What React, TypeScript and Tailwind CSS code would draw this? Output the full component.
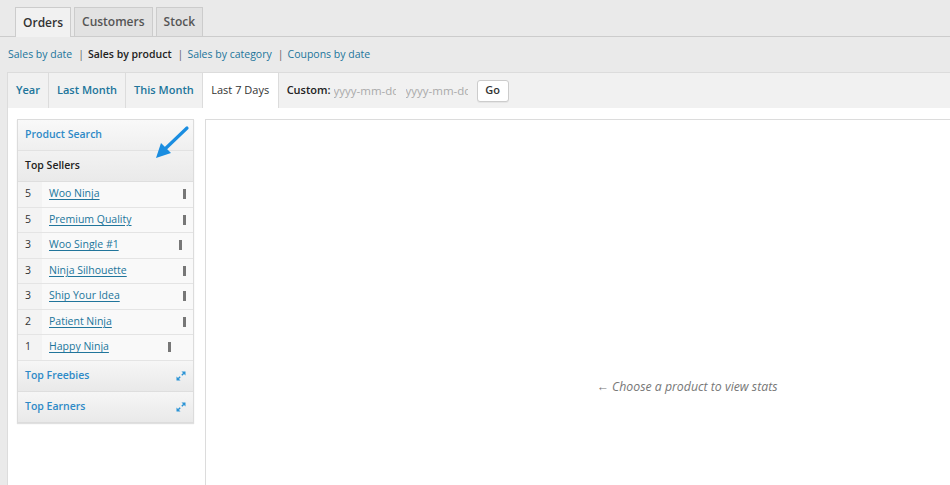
import React from 'react';

interface Seller {
  qty: number;
  name: string;
  barClass: string;
}

const sellers: Seller[] = [
  { qty: 5, name: 'Woo Ninja', barClass: 'mr-[7px]' },
  { qty: 5, name: 'Premium Quality', barClass: 'mr-[7px]' },
  { qty: 3, name: 'Woo Single #1', barClass: 'mr-[11px]' },
  { qty: 3, name: 'Ninja Silhouette', barClass: 'mr-[7px]' },
  { qty: 3, name: 'Ship Your Idea', barClass: 'mr-[7px]' },
  { qty: 2, name: 'Patient Ninja', barClass: 'mr-[7px]' },
  { qty: 1, name: 'Happy Ninja', barClass: 'mr-[22px]' },
];

const ranges = ['Year', 'Last Month', 'This Month'];

const ExpandIcon: React.FC = () => (
  <svg width="10" height="10" viewBox="0 0 10 10" className="text-[#2a93d5]">
    <line x1="2.2" y1="7.8" x2="4.2" y2="5.8" stroke="currentColor" strokeWidth="1.4" />
    <line x1="5.8" y1="4.2" x2="7.8" y2="2.2" stroke="currentColor" strokeWidth="1.4" />
    <polygon points="0.5,9.5 0.5,5.5 4.5,9.5" fill="currentColor" />
    <polygon points="9.5,0.5 9.5,4.5 5.5,0.5" fill="currentColor" />
  </svg>
);

const App: React.FC = () => {
  return (
    <div className="relative min-h-screen overflow-hidden bg-[#eaeaea] font-['Open_Sans',sans-serif] text-[#333]">
      {/* main tabs */}
      <div className="flex h-[37px] items-end gap-[3px] border-b border-[#cccccc] pl-[15px]">
        <div className="-mb-px flex h-[30px] items-center border border-b-0 border-[#cccccc] bg-[#f1f1f1] px-[7px] text-[12px] font-semibold">
          Orders
        </div>
        <div className="flex h-[29px] items-center border border-b-0 border-[#cccccc] bg-[#e2e2e2] px-[7px] text-[12px] font-semibold text-[#555]">
          Customers
        </div>
        <div className="flex h-[29px] items-center border border-b-0 border-[#cccccc] bg-[#e2e2e2] px-[7px] text-[12px] font-semibold text-[#555]">
          Stock
        </div>
      </div>

      {/* sub links */}
      <div className="flex h-[35px] items-center pl-[8px] text-[10.5px] text-[#21759b]">
        <span>Sales by date</span>
        <span className="ml-[6px] mr-[4px] text-[#666]">|</span>
        <span className="font-semibold text-[#222]">Sales by product</span>
        <span className="ml-[6px] mr-[4px] text-[#666]">|</span>
        <span>Sales by category</span>
        <span className="ml-[6px] mr-[4px] text-[#666]">|</span>
        <span>Coupons by date</span>
      </div>

      {/* stats box */}
      <div className="ml-[7px] border-l border-t border-[#dcdcdc]">
        <div className="flex h-[35px] items-stretch bg-[#f1f1f1] text-[11px]">
          {ranges.map((r) => (
            <div
              key={r}
              className="flex items-center border-r border-[#dcdcdc] px-[8px] font-semibold text-[#21759b]"
            >
              {r}
            </div>
          ))}
          <div className="flex items-center border-r border-[#dcdcdc] bg-white px-[8.5px] text-[#333]">
            Last 7 Days
          </div>
          <div className="flex items-center pl-[8px]">
            <span className="font-semibold text-[#222]">Custom:</span>
            <input
              type="text"
              placeholder="yyyy-mm-dd"
              className="ml-[3px] w-[62px] bg-transparent p-0 text-[11.5px] outline-none placeholder:text-[#aaa]"
            />
            <input
              type="text"
              placeholder="yyyy-mm-dd"
              className="ml-[10px] w-[62px] bg-transparent p-0 text-[11.5px] outline-none placeholder:text-[#aaa]"
            />
            <button className="ml-[9px] h-[22px] w-[32px] rounded-[3px] border border-[#cccccc] bg-white text-[11px] font-semibold text-[#333] shadow-[0_1px_0_#e5e5e5]">
              Go
            </button>
          </div>
        </div>

        <div className="flex min-h-[380px] bg-white pl-[9px] pt-[11px]">
          {/* sidebar */}
          <div className="mr-[11px] w-[177px] self-start border border-[#dcdcdc] shadow-[0_1px_1px_rgba(0,0,0,0.12)]">
            <div className="flex h-[31px] items-center border-b border-[#e2e2e2] bg-gradient-to-b from-[#f9f9f9] to-[#efefef] pl-[7px] text-[10.5px] font-semibold text-[#2e8ac7]">
              Product Search
            </div>
            <div className="flex h-[31px] items-center border-b border-[#dedede] bg-gradient-to-b from-[#f2f2f2] to-[#eaeaea] pl-[7px] text-[10.5px] font-semibold text-[#222]">
              Top Sellers
            </div>
            {sellers.map((s) => (
              <div key={s.name} className="flex h-[25.5px] items-stretch border-b border-[#e4e4e4] bg-[#f9f9f9] text-[10.5px]">
                <div className="flex w-[24px] items-center bg-[#f3f3f3] pl-[7px] text-[#333]">{s.qty}</div>
                <div className="flex flex-1 items-center pl-[7px]">
                  <span className="text-[#21759b] underline underline-offset-[2px]">{s.name}</span>
                </div>
                <div className="flex items-center">
                  <div className={`h-[10px] w-[3px] bg-[#777] ${s.barClass}`} />
                </div>
              </div>
            ))}
            <div className="flex h-[31px] items-center justify-between border-b border-[#dedede] bg-gradient-to-b from-[#f6f6f6] to-[#e9e9e9] pl-[7px] pr-[7px] text-[10.5px] font-semibold text-[#2e8ac7]">
              Top Freebies
              <ExpandIcon />
            </div>
            <div className="flex h-[30px] items-center justify-between bg-gradient-to-b from-[#f6f6f6] to-[#e9e9e9] pl-[7px] pr-[7px] text-[10.5px] font-semibold text-[#2e8ac7]">
              Top Earners
              <ExpandIcon />
            </div>
          </div>

          {/* chart area */}
          <div className="min-h-[400px] flex-1 border-l border-t border-[#dcdcdc] pl-[218px] pt-[258px] text-center text-[12.3px] italic text-[#777]">
            ← Choose a product to view stats
          </div>
        </div>
      </div>

      {/* annotation arrow */}
      <svg className="absolute left-[150px] top-[122px]" width="44" height="42" viewBox="0 0 44 42">
        <line x1="37" y1="6" x2="15" y2="27" stroke="#1a8de0" strokeWidth="3.2" strokeLinecap="round" />
        <polygon points="6,36 11,21 21,31" fill="#1a8de0" />
      </svg>
    </div>
  );
};

export default App;
